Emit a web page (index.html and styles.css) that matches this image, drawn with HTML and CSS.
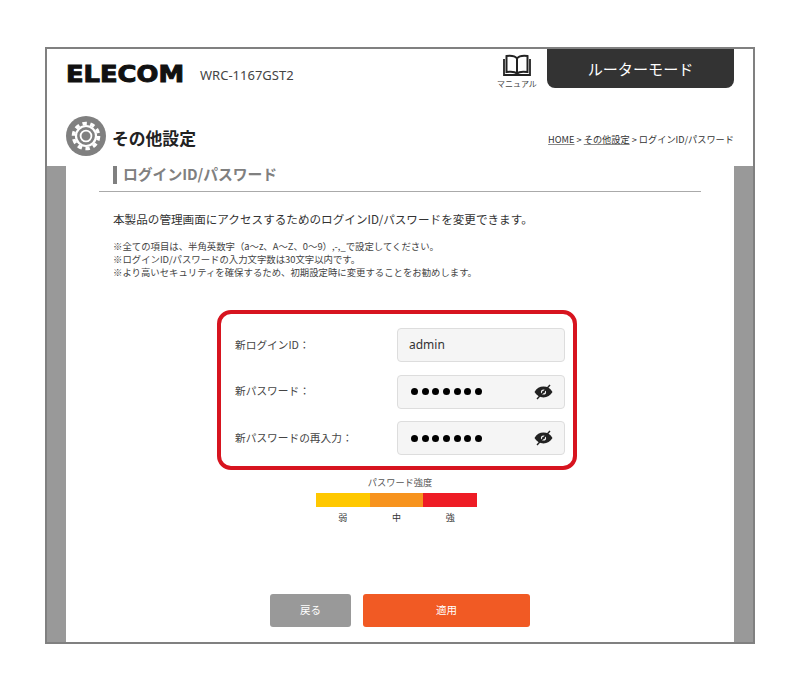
FILE: index.html
```html
<!DOCTYPE html>
<html lang="ja">
<head>
<meta charset="utf-8">
<title>ログインID/パスワード</title>
<link rel="stylesheet" href="styles.css">
</head>
<body>
<div class="frame">
  <header class="top">
    <div class="brand">
      <span class="logo">ELECOM</span>
      <span class="model">WRC-1167GST2</span>
    </div>
    <div class="top-right">
      <a class="manual">
        <svg class="book" width="28" height="22" viewBox="0 0 28 22" fill="none" stroke="#222" stroke-width="2">
          <path d="M14 4.500C12 2 7 1.500 3.500 2V18C7 17.500 12 17.500 14 19.500C16 17.500 21 17.500 24.500 18V2C21 1.500 16 2 14 4.500V19.500"/>
          <path d="M1 5V21H27V5" stroke-width="1.800"/>
        </svg>
        <span class="manual-label">マニュアル</span>
      </a>
      <div class="mode">ルーターモード</div>
    </div>
  </header>
  <div class="titlebar">
    <div class="page-title">
      <svg class="gear" width="40" height="40" viewBox="0 0 40 40">
        <circle cx="20" cy="20" r="20" fill="#808080"/>
        <g fill="none" stroke="#fff">
          <circle cx="20" cy="20" r="12.600" stroke-width="3.400" stroke-dasharray="4.400 3.520"/>
          <circle cx="20" cy="20" r="10" stroke-width="2.200"/>
          <circle cx="20" cy="20" r="5.400" stroke-width="1.800"/>
        </g>
      </svg>
      <h1>その他設定</h1>
    </div>
    <nav class="crumbs"><a>HOME</a> &gt; <a>その他設定</a> &gt; ログインID/パスワード</nav>
  </div>
  <main class="band">
    <div class="panel">
      <div class="section-head"><h2>ログインID/パスワード</h2></div>
      <p class="lead">本製品の管理画面にアクセスするためのログインID/パスワードを変更できます。</p>
      <ul class="notes">
        <li>※全ての項目は、半角英数字（a〜z、A〜Z、0〜9）,-,_で設定してください。</li>
        <li>※ログインID/パスワードの入力文字数は30文字以内です。</li>
        <li>※より高いセキュリティを確保するため、初期設定時に変更することをお勧めします。</li>
      </ul>
      <form class="formbox">
        <div class="row">
          <label>新ログインID：</label>
          <div class="field"><span class="value">admin</span></div>
        </div>
        <div class="row">
          <label>新パスワード：</label>
          <div class="field"><span class="dots"><i></i><i></i><i></i><i></i><i></i><i></i><i></i></span>
            <svg class="eye" width="19" height="16" viewBox="0 0 19 16"><path fill="#222" fill-rule="evenodd" d="M.5 8C2.500 4.400 5.800 2.600 9.500 2.600S16.500 4.400 18.500 8C16.500 11.600 13.200 13.400 9.500 13.400S2.500 11.600.5 8ZM9.500 5.400A2.600 2.600 0 1 0 9.500 10.600A2.600 2.600 0 1 0 9.500 5.400Z"/><circle cx="9.500" cy="8" r="1.300" fill="#222"/><path d="M3 15L16 1" stroke="#222" stroke-width="1.400"/></svg>
          </div>
        </div>
        <div class="row">
          <label>新パスワードの再入力：</label>
          <div class="field"><span class="dots"><i></i><i></i><i></i><i></i><i></i><i></i><i></i></span>
            <svg class="eye" width="19" height="16" viewBox="0 0 19 16"><path fill="#222" fill-rule="evenodd" d="M.5 8C2.500 4.400 5.800 2.600 9.500 2.600S16.500 4.400 18.500 8C16.500 11.600 13.200 13.400 9.500 13.400S2.500 11.600.5 8ZM9.500 5.400A2.600 2.600 0 1 0 9.500 10.600A2.600 2.600 0 1 0 9.500 5.400Z"/><circle cx="9.500" cy="8" r="1.300" fill="#222"/><path d="M3 15L16 1" stroke="#222" stroke-width="1.400"/></svg>
          </div>
        </div>
      </form>
      <div class="strength">
        <div class="strength-title">パスワード強度</div>
        <div class="meter"><span class="weak"></span><span class="mid"></span><span class="strong"></span></div>
        <div class="meter-labels"><span>弱</span><span>中</span><span>強</span></div>
      </div>
      <div class="actions">
        <button type="button" class="btn back">戻る</button>
        <button type="button" class="btn apply">適用</button>
      </div>
    </div>
  </main>
</div>
</body>
</html>
```
FILE: styles.css
```css
* { box-sizing: border-box; }
html, body { margin: 0; padding: 0; background: #fff; }
body {
  width: 800px;
  height: 690px;
  padding: 47px 45px 46px;
  font-family: "Noto Sans CJK JP", "Noto Sans", sans-serif;
  color: #333;
  overflow: hidden;
}
.frame {
  width: 710px;
  height: 597px;
  border: 2px solid #808080;
  display: flex;
  flex-direction: column;
  background: #fff;
}
.top {
  height: 42px;
  display: flex;
  justify-content: space-between;
  padding: 0 19px;
  flex: none;
}
.brand { display: flex; align-items: center; padding-top: 5px; height: 47px; }
.logo {
  display: inline-block;
  font-family: "DejaVu Sans", sans-serif;
  font-weight: 700;
  font-size: 23px;
  line-height: 22px;
  color: #111;
  -webkit-text-stroke: 1px #111;
  width: 134px;
  margin-top: -3px;
  transform: scaleX(1.12);
  transform-origin: left center;
}
.model {
  font-family: "Noto Sans", sans-serif;
  font-size: 13px;
  color: #444;
}
.top-right { display: flex; align-items: flex-start; }
.manual {
  width: 46px;
  margin-right: 7px;
  display: flex;
  flex-direction: column;
  align-items: center;
  padding-top: 5px;
}
.book { display: block; }
.manual-label { font-size: 8px; line-height: 10px; margin-top: 3px; color: #444; white-space: nowrap; }
.mode {
  width: 187px;
  height: 39px;
  background: #333;
  color: #fff;
  font-size: 15.100px;
  line-height: 39px;
  text-align: center;
  border-radius: 0 0 8px 8px;
}
.titlebar {
  height: 75px;
  flex: none;
  padding: 25px 19px 0;
  display: flex;
  justify-content: space-between;
  align-items: flex-start;
}
.page-title { display: flex; align-items: center; gap: 6px; height: 40px; }
.gear { display: block; }
h1 { margin: 0; font-size: 16.800px; font-weight: 700; color: #222; line-height: 1; position: relative; top: 2px; }
.crumbs { font-size: 9.200px; line-height: 14px; margin-top: 16px; color: #333; white-space: nowrap; }
.crumbs a { text-decoration: underline; text-decoration-color: #888; }
.band {
  flex: 1;
  background: #999;
  padding: 0 19px;
  min-height: 0;
  display: flex;
}
.panel {
  flex: 1;
  background: #fff;
  display: flex;
  flex-direction: column;
}
.section-head {
  margin: 0 33px;
  height: 26px;
  border-bottom: 1px solid #aaa;
  padding-left: 14px;
}
h2 {
  margin: 0;
  height: 18px;
  border-left: 4px solid #808080;
  padding-left: 6px;
  font-size: 14.800px;
  line-height: 16px;
  font-weight: 700;
  color: #808080;
}
.lead { margin: 18px 0 0 47px; font-size: 11.600px; line-height: 18px; color: #333; }
.notes { list-style: none; margin: 12px 0 0 47px; padding: 0; font-size: 9.400px; line-height: 13px; color: #444; }
.formbox {
  margin: 31px 0 0 151px;
  width: 360px;
  height: 160px;
  border: 4px solid #d7141f;
  border-radius: 14px;
  padding: 14px 8px 0 14px;
  display: flex;
  flex-direction: column;
  gap: 12.500px;
}
.row { display: flex; align-items: center; justify-content: space-between; height: 34px; }
.row label { font-size: 10.700px; color: #444; padding-bottom: 2px; }
.field {
  width: 168px;
  height: 34px;
  background: #f5f5f5;
  border: 1px solid #ddd;
  border-radius: 4px;
  padding: 0 11px 0 11px;
  display: flex;
  align-items: center;
  justify-content: space-between;
}
.value { font-family: "Noto Sans", sans-serif; font-size: 12px; color: #333; padding-bottom: 2px; }
.dots { display: flex; gap: 3.700px; margin-left: 2px; }
.dots i { width: 7px; height: 7px; border-radius: 50%; background: #000; display: block; }
.eye { display: block; }
.strength { margin-top: 5px; display: flex; flex-direction: column; align-items: center; width: 661px; }
.strength-title { font-size: 9.200px; line-height: 14px; color: #555; margin-left: 7px; }
.meter { display: flex; width: 161px; height: 14px; margin-top: 4px; }
.meter span { flex: 1; }
.weak { background: #ffc800; }
.mid { background: #f7931e; }
.strong { background: #ee1c25; }
.meter-labels { display: flex; width: 161px; margin-top: 5px; }
.meter-labels span { flex: 1; text-align: center; font-size: 9px; line-height: 12px; color: #333; }
.actions { margin: 70px 0 0 204px; display: flex; gap: 12px; }
.btn {
  height: 33px;
  border: 0;
  border-radius: 3px;
  color: #fff;
  font-family: inherit;
  font-size: 10.500px;
  padding: 0 0 2px;
}
.back { width: 81px; background: #999; }
.apply { width: 167px; background: #f15a24; }
```
